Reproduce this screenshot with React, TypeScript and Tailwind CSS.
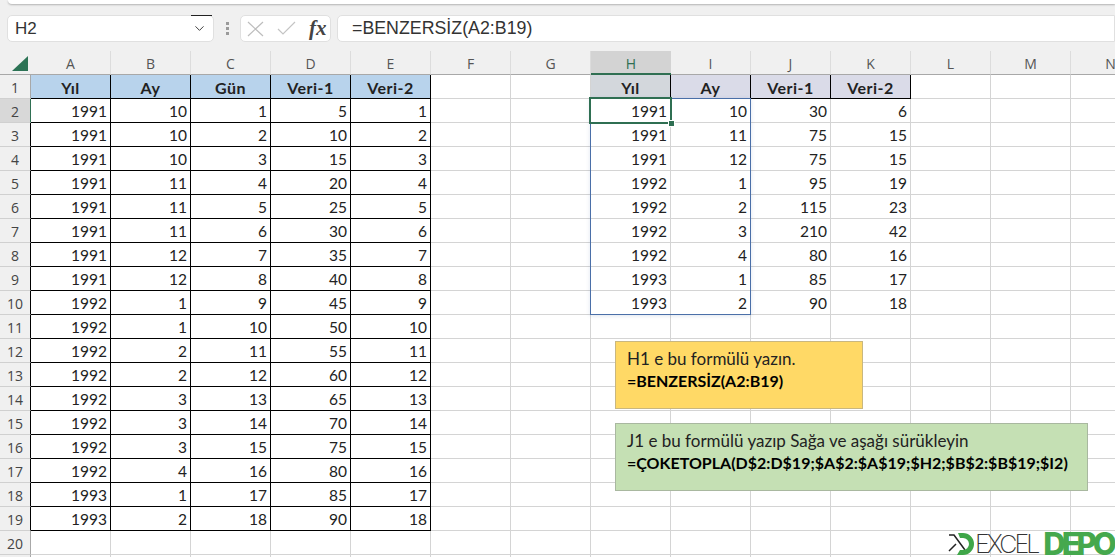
import React from 'react'
import { ChevronDown } from 'lucide-react'

const columns = ['A', 'B', 'C', 'D', 'E', 'F', 'G', 'H', 'I', 'J', 'K', 'L', 'M', 'N']

const leftHead = ['Yıl', 'Ay', 'Gün', 'Veri-1', 'Veri-2']
const leftRows = [
  [1991, 10, 1, 5, 1],
  [1991, 10, 2, 10, 2],
  [1991, 10, 3, 15, 3],
  [1991, 11, 4, 20, 4],
  [1991, 11, 5, 25, 5],
  [1991, 11, 6, 30, 6],
  [1991, 12, 7, 35, 7],
  [1991, 12, 8, 40, 8],
  [1992, 1, 9, 45, 9],
  [1992, 1, 10, 50, 10],
  [1992, 2, 11, 55, 11],
  [1992, 2, 12, 60, 12],
  [1992, 3, 13, 65, 13],
  [1992, 3, 14, 70, 14],
  [1992, 3, 15, 75, 15],
  [1992, 4, 16, 80, 16],
  [1993, 1, 17, 85, 17],
  [1993, 2, 18, 90, 18],
]

const rightHead = ['Yıl', 'Ay', 'Veri-1', 'Veri-2']
const rightRows = [
  [1991, 10, 30, 6],
  [1991, 11, 75, 15],
  [1991, 12, 75, 15],
  [1992, 1, 95, 19],
  [1992, 2, 115, 23],
  [1992, 3, 210, 42],
  [1992, 4, 80, 16],
  [1993, 1, 85, 17],
  [1993, 2, 90, 18],
]

const FormulaBar = () => (
  <div className="h-[51px] bg-[#f0f0f0] relative font-['Liberation_Sans',sans-serif]">
    <div className="absolute top-0 left-[8px] right-0 h-[4px] bg-white rounded-bl-md shadow-[0_1px_2px_rgba(0,0,0,0.25)]" />
    <div className="flex items-start pt-[15px] pl-[7px]">
      {/* Name box */}
      <div className="relative w-[207px] h-[27px] bg-white border border-[#e0e0e0] rounded-[5px] flex items-center justify-between pl-[7px] pr-[6px] text-[17px] text-[#333]">
        <span className="absolute top-[-1px] left-[183px] w-[21px] h-px bg-[#222]" />
        H2
        <ChevronDown size={15} strokeWidth={1.5} className="text-[#333]" />
      </div>
      {/* Dots */}
      <div className="w-[26px] h-[27px] flex flex-col items-center justify-center gap-[2px]">
        <span className="w-[3px] h-[3px] bg-[#9a9a9a]" />
        <span className="w-[3px] h-[3px] bg-[#9a9a9a]" />
        <span className="w-[3px] h-[3px] bg-[#9a9a9a]" />
      </div>
      {/* Cancel, enter, fx */}
      <div className="w-[91px] h-[27px] bg-white border border-[#e0e0e0] rounded-[5px] flex items-center pl-[6px] gap-[13px]">
        <svg width="17" height="16" viewBox="0 0 17 16" fill="none" stroke="#bdbdbd" strokeWidth="1.2">
          <path d="M1 1l15 14M16 1L1 15" />
        </svg>
        <svg width="19" height="15" viewBox="0 0 19 15" fill="none" stroke="#c4c4c4" strokeWidth="1.2">
          <path d="M1 8l5 5L18 1" />
        </svg>
        <span className="font-['Liberation_Serif',serif] italic font-bold text-[21px] leading-none text-[#444]">fx</span>
      </div>
      {/* Formula */}
      <div className="ml-[6px] flex-1 h-[27px] bg-white border border-[#e0e0e0] rounded-l-[5px] flex items-center pl-[14px] text-[17.8px] text-[#333]">
        =BENZERSİZ(A2:B19)
      </div>
    </div>
  </div>
)

const Logo = () => (
  <div className="absolute left-[948px] top-[532px] flex items-center h-[24px]">
    <svg width="27" height="24" viewBox="0 0 27 24" fill="none">
      <path d="M1 3h5l11 15M1 19l7-7" stroke="#222" strokeWidth="1.5" />
      <path d="M10 1h5a11 11 0 0 1 0 22h-6l3-5h3a6 6 0 0 0 0-12h-3z" fill="#3fa648" />
    </svg>
    <span className="font-['Inter',sans-serif] font-extralight text-[25px] leading-[24px] tracking-[-3px] text-[#333]">EXCEL</span>
    <span className="font-['Inter',sans-serif] font-extrabold text-[31px] leading-[24px] tracking-[-4px] text-[#45a84d] ml-[6px]">DEPO</span>
  </div>
)

const App = () => {
  const rowCount = 21

  return (
    <div className="relative w-[1115px] h-[557px] overflow-hidden bg-white">
      <FormulaBar />

      {/* Sheet */}
      <div className="grid grid-cols-[31px_repeat(14,80px)] auto-rows-[24px] font-['Lato',sans-serif] text-[15.5px] text-[#222]">
        {/* Column headers */}
        <div className="relative bg-[#f0f0f0] border-b border-[#a8a8a8]">
          <span className="absolute left-[12px] top-[5px] w-0 h-0 border-l-[16px] border-l-transparent border-b-[15px] border-b-[#2c7355]" />
        </div>
        {columns.map((c) => (
          <div
            key={c}
            className={
              c === 'H'
                ? "flex items-center justify-center pt-[2px] bg-[#d3d3d3] border-b-2 border-[#2f6f52] text-[14px] text-[#2f6f52] font-['Open_Sans',sans-serif]"
                : "flex items-center justify-center pt-[2px] bg-[#f0f0f0] border-b border-r border-b-[#a8a8a8] border-r-[#dcdcdc] text-[14px] text-[#555] font-['Open_Sans',sans-serif]"
            }
          >
            {c}
          </div>
        ))}

        {Array.from({ length: rowCount }).map((_, r) => {
          const rowNum = r + 1
          return (
            <React.Fragment key={rowNum}>
              <div
                className={`flex items-center justify-center pt-[2px] text-[14px] font-['Open_Sans',sans-serif] text-[#444] border-b border-b-[#d0d0d0] border-r ${
                  rowNum === 2
                    ? 'bg-[#d8d8d8] border-r-[#2f6f52]'
                    : rowNum > 2 && rowNum < 20
                      ? 'bg-[#f0f0f0] border-r-black'
                      : 'bg-[#f0f0f0] border-r-[#a8a8a8]'
                }`}
              >
                {rowNum <= 20 ? rowNum : null}
              </div>
              {columns.map((c, i) => {
                // left table, A1:E19
                if (i < 5 && rowNum === 1) {
                  return (
                    <div key={c} className="flex items-center justify-center pt-[2px] font-bold text-[16px] tracking-[0.5px] bg-[#b8d3ec] border-r border-b border-black">
                      {leftHead[i]}
                    </div>
                  )
                }
                if (i < 5 && rowNum <= 19) {
                  return (
                    <div key={c} className="flex items-center justify-end pt-[2px] pr-[3px] border-r border-b border-black">
                      {leftRows[r - 1][i]}
                    </div>
                  )
                }
                // right table, H1:K10
                if (i >= 7 && i <= 10 && rowNum === 1) {
                  return (
                    <div
                      key={c}
                      className={`flex items-center justify-center pt-[2px] font-bold text-[16px] tracking-[0.5px] border-r border-b border-black ${
                        i === 7 ? 'bg-[#d3d7dc]' : 'bg-[#dadbe8]'
                      }`}
                    >
                      {rightHead[i - 7]}
                    </div>
                  )
                }
                if (i >= 7 && i <= 10 && rowNum <= 10) {
                  return (
                    <div key={c} className="flex items-center justify-end pt-[2px] pr-[3px] border-r border-b border-[#d4d4d4]">
                      {rightRows[r - 1][i - 7]}
                    </div>
                  )
                }
                return <div key={c} className="border-r border-b border-[#d4d4d4]" />
              })}
            </React.Fragment>
          )
        })}
      </div>

      {/* Spill range H2:I10 */}
      <div className="absolute left-[590px] top-[98px] w-[161px] h-[217px] border border-[#4a6fa8] shadow-[0_1px_4px_rgba(74,111,168,0.18)] pointer-events-none" />
      {/* Active cell H2 */}
      <div className="absolute left-[589px] top-[97px] w-[83px] h-[27px] border-2 border-[#2f6f52] pointer-events-none" />
      <div className="absolute left-[668px] top-[120px] w-[5px] h-[5px] bg-[#2f6f52] border border-white box-content" />

      {/* Notes */}
      <div className="absolute left-[615px] top-[341px] w-[248px] h-[68px] bg-[#ffd966] border border-[#c9b77f] pl-[11px] pt-[6px] font-['Lato',sans-serif] text-[17px] leading-[22px] text-[#222]">
        <div>H1 e bu formülü yazın.</div>
        <div className="font-bold text-[16px] text-black">=BENZERSİZ(A2:B19)</div>
      </div>
      <div className="absolute left-[615px] top-[423px] w-[473px] h-[68px] bg-[#c5e0b4] border border-[#a9b8a0] pl-[11px] pt-[6px] font-['Lato',sans-serif] text-[17px] leading-[22px] text-[#222]">
        <div>J1 e bu formülü yazıp Sağa ve aşağı sürükleyin</div>
        <div className="font-bold text-[16px] text-black whitespace-nowrap">=ÇOKETOPLA(D$2:D$19;$A$2:$A$19;$H2;$B$2:$B$19;$I2)</div>
      </div>

      <Logo />
    </div>
  )
}

export default App
